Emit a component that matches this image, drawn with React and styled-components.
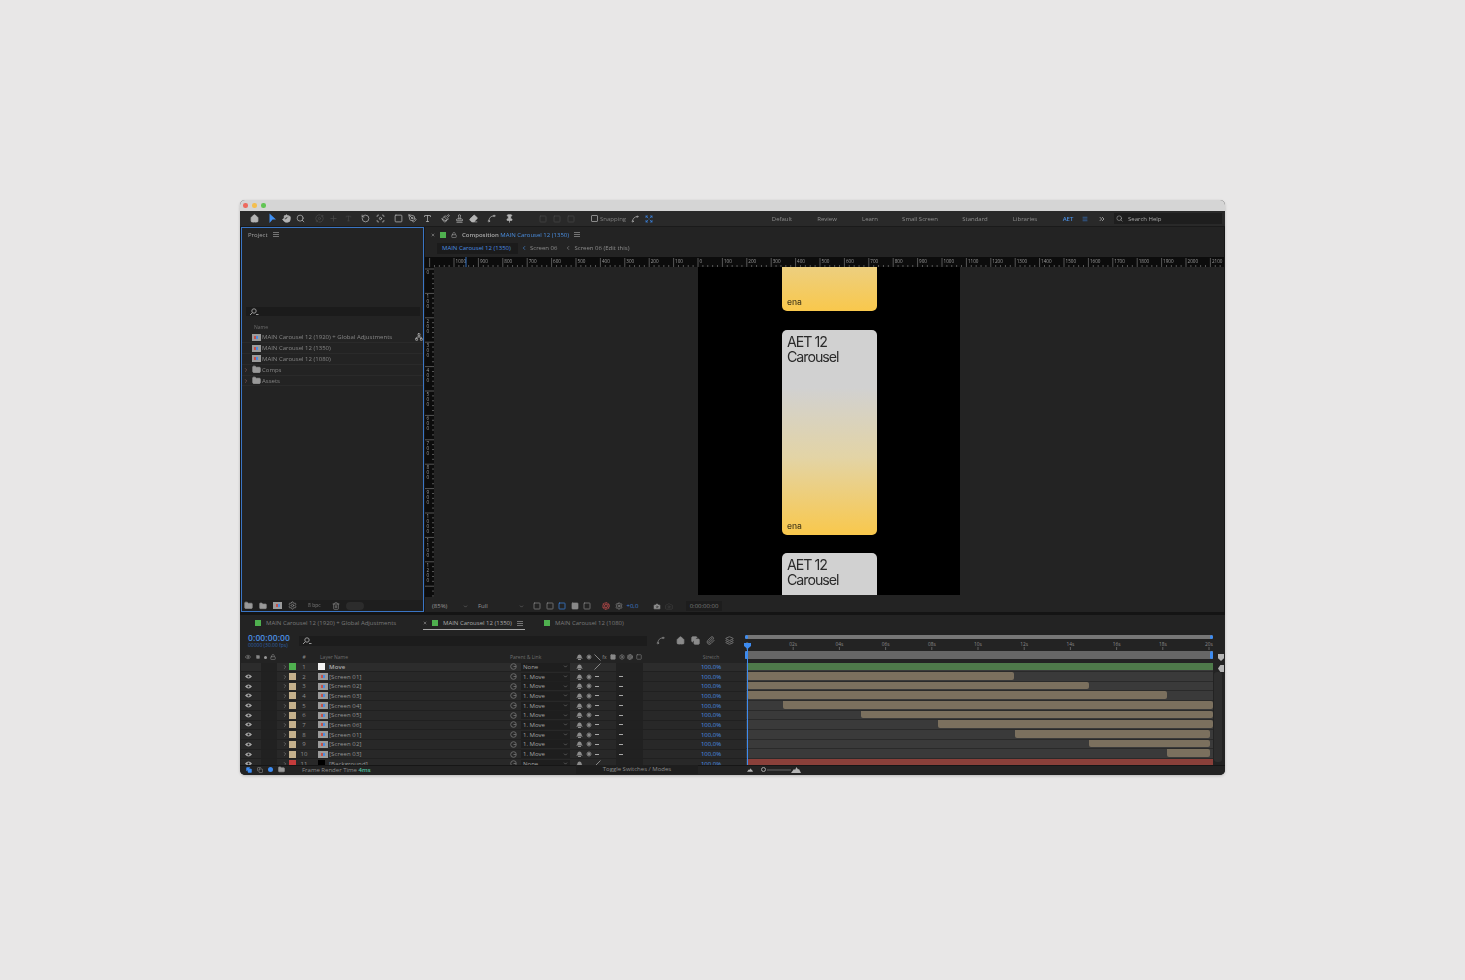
import React from 'react';
import styled, { createGlobalStyle } from 'styled-components';
import { Home, Hand, Search, Plus, RotateCcw, Square, Type, Stamp, Eraser, Pin, Camera, Eye, Lock, Tag, ChevronRight, ChevronDown, ChevronLeft, Menu, X, Folder, Trash2, Paperclip, ChevronsRight, Settings, Network, PenTool, Paintbrush, Focus, Orbit, Spline, Expand, Aperture, Layers, Copy } from 'lucide-react';

const GlobalStyle = createGlobalStyle`
  html, body { margin: 0; padding: 0; background: #e8e7e7; }
  body { font-family: "Open Sans", "Liberation Sans", sans-serif; }
  * { box-sizing: border-box; }
`;

const Page = styled.div`
  width: 1465px;
  height: 980px;
  padding: 200px 0 0 240px;
`;
const Window = styled.div`
  width: 985px;
  height: 575px;
  display: flex;
  flex-direction: column;
  background: #232323;
  border-radius: 5px;
  overflow: hidden;
  font-size: 6px;
  font-weight: 500;
  line-height: 1;
  color: #969696;
  filter: blur(0.25px);
  box-shadow: 0 1px 3px rgba(0, 0, 0, 0.2);
`;
const TitleBar = styled.div`
  height: 11px;
  flex: none;
  display: flex;
  align-items: center;
  gap: 4.5px;
  padding-left: 3px;
  background: #d5d5d5;
`;
const Dot = styled.span`
  flex: none;
  width: ${p => p.$s || 4.5}px;
  height: ${p => p.$s || 4.5}px;
  margin-left: ${p => p.$ml || 0}px;
  border-radius: 50%;
  background: ${p => p.$c};
`;
const Toolbar = styled.div`
  height: 16px;
  flex: none;
  display: flex;
  align-items: center;
  background: #292929;
  border-bottom: 1px solid #1a1a1a;
`;
const Tool = styled.span`
  flex: none;
  width: 10px;
  height: 14px;
  display: flex;
  align-items: center;
  justify-content: center;
  margin-left: ${p => p.$ml || 0}px;
  color: ${p => p.$c || (p.$dim ? '#4a4a4a' : '#b4b4b4')};
`;
const Snap = styled.span`
  display: flex;
  align-items: center;
  gap: 2px;
  margin-left: 15px;
  width: 37px;
  color: #808080;
  white-space: nowrap;
`;
const Check = styled.span`
  flex: none;
  width: 7px;
  height: 7px;
  border: 1px solid #8a8a8a;
  border-radius: 1px;
`;
const Workspace = styled.span`
  flex: none;
  width: ${p => p.$w}px;
  margin-left: ${p => p.$ml || 0}px;
  margin-top: 1px;
  text-align: center;
  color: ${p => (p.$on ? '#4a8ee0' : '#8d8d8d')};
  font-weight: ${p => (p.$on ? 600 : 500)};
`;
const HelpBox = styled.div`
  flex: none;
  width: 108px;
  height: 11px;
  margin-left: 7px;
  display: flex;
  align-items: center;
  gap: 5px;
  padding-left: 2px;
  background: #1e1e1e;
  color: #a8a8a8;
`;
const Upper = styled.div`
  height: 385px;
  flex: none;
  display: flex;
  padding-left: 1px;
  background: #171717;
`;
const ProjectPanel = styled.div`
  width: 183px;
  flex: none;
  display: flex;
  flex-direction: column;
  background: #232323;
  border: 1px solid #3a75c4;
  padding-top: 3px;
`;
const PanelTitle = styled.div`
  display: flex;
  align-items: center;
  gap: 5px;
  height: 7px;
  padding-left: 6px;
  color: #a0a0a0;
`;
const ProjectSearch = styled.div`
  height: 9px;
  margin: 69px 3px 0 4px;
  padding-left: 3px;
  display: flex;
  align-items: center;
  background: #1b1b1b;
  color: #999;
`;
const NameHead = styled.div`
  margin-top: 8.5px;
  height: 8px;
  padding-left: 12px;
  color: #6c6c6c;
  font-size: 5px;
`;
const ProjectRow = styled.div`
  height: 10.8px;
  display: flex;
  align-items: center;
  gap: 1.5px;
  padding-left: 1px;
  border-bottom: 1px solid #2a2a2a;
  color: #868686;
`;
const Twist = styled.span`
  width: 7px;
  flex: none;
  display: flex;
  color: #9a6f6f;
`;
const ProjectName = styled.span`
  flex: 1;
  white-space: nowrap;
`;
const ThumbBox = styled.span`
  flex: none;
  width: ${p => p.$w || 9}px;
  height: ${p => p.$h || 7}px;
  background: #9b9b9b;
  display: flex;
  align-items: center;
  justify-content: center;
`;
const Pip = styled.span`
  width: 2px;
  height: 3px;
  background: ${p => p.$c};
`;
const ProjectFoot = styled.div`
  margin-top: auto;
  height: 11px;
  display: flex;
  align-items: center;
  gap: 6px;
  padding-left: 2px;
  background: #1e1e1e;
  color: #888;
`;
const Bpc = styled.span`
  font-size: 5px;
  margin: 0 5px 0 5px;
  color: #7c7c7c;
`;
const Pill = styled.span`
  width: 18px;
  height: 8px;
  border-radius: 4px;
  background: #2c2c2c;
`;
const CompPanel = styled.div`
  flex: 1;
  margin-left: 1px;
  margin-right: 1px;
  display: flex;
  flex-direction: column;
  background: #232323;
  overflow: hidden;
`;
const CompHead = styled.div`
  height: 15px;
  flex: none;
  display: flex;
  align-items: center;
  gap: 5px;
  padding-left: 6px;
  font-weight: 600;
  color: #aaa;
`;
const Swatch = styled.span`
  flex: none;
  width: ${p => p.$s || 6}px;
  height: ${p => p.$s || 6}px;
  background: ${p => p.$c};
`;
const Blue = styled.span`
  color: #4a8ee0;
  font-weight: 500;
`;
const Crumbs = styled.div`
  height: 15px;
  flex: none;
  display: flex;
  align-items: center;
  padding: 0 0 3px 12px;
  gap: 3px;
  color: #8c8c8c;
  white-space: nowrap;
`;
const CrumbOn = styled.span`
  background: #1b1b1b;
  color: #4a8ee0;
  padding: 2.5px 0 2.5px 5px;
  width: 81px;
`;
const RulerSvg = styled.svg`
  display: block;
  flex: none;
  background: #0c0c0c;
`;
const Viewer = styled.div`
  height: 330px;
  flex: none;
  display: flex;
`;
const Canvas = styled.div`
  flex: 1;
  display: flex;
  justify-content: center;
  background: #232323;
`;
const Stage = styled.div`
  width: 262px;
  height: 328px;
  overflow: hidden;
  background: #000;
  display: flex;
  flex-direction: column;
  align-items: center;
  gap: 18.5px;
`;
const Card = styled.div`
  width: 95px;
  height: 205px;
  flex: none;
  display: flex;
  flex-direction: column;
  justify-content: ${p => (p.$end ? 'flex-end' : 'space-between')};
  padding: 4px 5px 5px 5.5px;
  margin-top: ${p => p.$mt || 0}px;
  border-radius: 5px;
  background: linear-gradient(#d1d1d1 0%, #d1d1d1 28%, #e3d4a6 62%, #f9c84c 100%);
  color: #2a2a2a;
`;
const CardTitle = styled.div`
  font-family: Inter, "Liberation Sans", sans-serif;
  font-size: 14.2px;
  line-height: 15px;
  letter-spacing: -1px;
  font-weight: 400;
`;
const CardMark = styled.div`
  font-family: Inter, "Liberation Sans", sans-serif;
  font-size: 8.5px;
  font-weight: 500;
  letter-spacing: -0.1px;
  line-height: 8px;
  color: #4a3e1c;
`;
const CompFoot = styled.div`
  height: 15px;
  flex: none;
  display: flex;
  align-items: center;
  padding: 3px 0 0 7px;
  color: #969696;
  background: #232323;
`;
const FootSelect = styled.span`
  flex: none;
  display: flex;
  align-items: center;
  justify-content: space-between;
  width: ${p => p.$w}px;
  margin-left: ${p => p.$ml || 0}px;
`;
const FootIcon = styled.span`
  flex: none;
  display: flex;
  width: ${p => p.$w || 8}px;
  margin-left: ${p => p.$ml || 4.5}px;
  color: ${p => p.$c || '#8e8e8e'};
`;
const TimeChip = styled.span`
  flex: none;
  width: 36px;
  height: 10px;
  margin-left: 13px;
  text-align: center;
  line-height: 10px;
  background: #1d1d1d;
  color: #7c7c7c;
  white-space: nowrap;
`;
const Gap = styled.div`
  height: 3px;
  flex: none;
  background: #141414;
`;
const Lower = styled.div`
  flex: 1;
  display: flex;
  flex-direction: column;
  min-height: 0;
  background: #232323;
`;
const Tabs = styled.div`
  height: 17px;
  flex: none;
  display: flex;
  align-items: flex-start;
  padding-top: 1px;
`;
const Tab = styled.span`
  flex: none;
  height: 14px;
  padding-top: 1px;
  display: flex;
  align-items: center;
  gap: 5px;
  white-space: nowrap;
  width: ${p => p.$w}px;
  margin-left: ${p => p.$ml || 0}px;
  color: ${p => (p.$on ? '#ababab' : '#7a7a7a')};
  border-bottom: 1px solid ${p => (p.$on ? '#a9a9a9' : 'transparent')};
`;
const TimeRow = styled.div`
  flex: 1;
  min-height: 0;
  display: flex;
`;
const LeftPane = styled.div`
  width: 505px;
  flex: none;
  margin-left: 1px;
  display: flex;
  flex-direction: column;
  min-height: 0;
`;
const Controls = styled.div`
  height: 20px;
  flex: none;
  display: flex;
  align-items: center;
  padding-bottom: 3px;
`;
const Clock = styled.div`
  width: 58px;
  padding: 1px 0 0 7px;
  flex: none;
  align-self: flex-start;
  white-space: nowrap;
`;
const ClockBig = styled.div`
  color: #4a8ee0;
  font-size: 8.5px;
  font-weight: 600;
  line-height: 9px;
  letter-spacing: 0.1px;
`;
const ClockSmall = styled.div`
  color: #2f62a8;
  font-size: 5px;
  line-height: 6px;
`;
const LayerSearch = styled.div`
  width: 348px;
  height: 10px;
  flex: none;
  padding-left: 3px;
  display: flex;
  align-items: center;
  background: #1c1c1c;
  color: #999;
`;
const CtlIcon = styled.span`
  flex: none;
  display: flex;
  margin-left: ${p => p.$ml}px;
  color: #8a8a8a;
`;
const grid = '14px 6px 8px 8px 3px 9px 8px 14px 7px 11px 179px 10px 3px 49px 5px 9px 9px 8px 15px 9px 9px 9px 52px 32px 19px';
const HeadRow = styled.div`
  height: 10.5px;
  flex: none;
  display: grid;
  grid-template-columns: ${grid};
  align-items: center;
  color: #6e6e6e;
  font-size: 5px;
  white-space: nowrap;
`;
const Rows = styled.div`
  flex: 1;
  min-height: 0;
  overflow: hidden;
`;
const Row = styled.div`
  height: 9.7px;
  display: grid;
  grid-template-columns: ${grid};
  align-items: center;
  background: ${p => (p.$first ? '#2c2c2c' : '#282828')};
  border-bottom: 0.5px solid #202020;
  white-space: nowrap;
`;
const Cell = styled.span`
  display: flex;
  align-items: center;
  justify-content: ${p => (p.$split ? 'space-between' : 'center')};
  height: 100%;
  margin-left: ${p => p.$ml || 0}px;
  color: ${p => p.$c || '#939393'};
  background: ${p => (p.$dark ? '#212121' : 'transparent')};
`;
const LayerName = styled.span`
  color: ${p => (p.$bold ? '#adadad' : '#949494')};
  font-weight: ${p => (p.$bold ? 600 : 500)};
  letter-spacing: 0.1px;
`;
const Num = styled.span`
  text-align: center;
  color: #8e8e8e;
`;
const ParentBox = styled.span`
  display: flex;
  align-items: center;
  justify-content: space-between;
  height: 8px;
  padding: 0 2px 0 2px;
  background: #1e1e1e;
  color: #a2a2a2;
`;
const Stretch = styled.span`
  color: ${p => p.$c || '#4a8ee0'};
  text-align: center;
`;
const Shifted = styled.span`
  margin-left: ${p => p.$ml}px;
`;
const Timeline = styled.div`
  flex: 1;
  min-width: 0;
  position: relative;
  display: flex;
  flex-direction: column;
  min-height: 0;
`;
const NavBar = styled.div`
  height: 4px;
  margin: 3px 12px 0 -1px;
  flex: none;
  background: #777;
  border-radius: 2px;
  display: flex;
  justify-content: space-between;
`;
const NavEnd = styled.span`
  width: 3px;
  height: ${p => p.$h || 4}px;
  background: #3d8bf0;
  border-radius: 2px;
`;
const WorkArea = styled.div`
  height: 8px;
  margin: 1px 12px 3.7px -1px;
  flex: none;
  background: #666;
  display: flex;
  justify-content: space-between;
`;
const TickSvg = styled.svg`
  display: block;
  flex: none;
`;
const Tracks = styled.div`
  flex: 1;
  min-height: 0;
  width: 467px;
  overflow: hidden;
  background: #3a3a3a;
`;
const Track = styled.div`
  height: ${p => p.$h}px;
  padding-left: ${p => p.$from}px;
  padding-bottom: 1px;
  border-bottom: 0.4px solid #2a2a2a;
  display: flex;
`;
const Bar = styled.div`
  height: 100%;
  flex: none;
  border-radius: ${p => (p.$soft ? '0 2px 2px 2px' : '0')};
  background: ${p => p.$c};
`;
const Playhead = styled.div`
  position: absolute;
  left: 1px;
  top: 12px;
  bottom: 0;
  width: 1px;
  background: #3d8bf0;
`;
const PlayTop = styled.span`
  position: absolute;
  left: -3px;
  top: -1px;
  width: 7px;
  height: 6px;
  background: #3d8bf0;
  clip-path: polygon(0 0, 100% 0, 100% 50%, 50% 100%, 0 50%);
`;
const Marker = styled.span`
  position: absolute;
  left: ${p => p.$x}px;
  top: ${p => p.$y}px;
  width: 6px;
  height: 7px;
  background: #b5b5b5;
  clip-path: ${p => p.$clip};
`;
const Scroller = styled.span`
  position: absolute;
  left: 468px;
  top: 40px;
  bottom: 3px;
  width: 8px;
  border-radius: 3px;
  background: #2e2e2e;
`;
const Status = styled.div`
  height: 10px;
  flex: none;
  display: flex;
  align-items: center;
  padding: 0 0 1.5px 6px;
  background: #232323;
  border-top: 1px solid #161616;
  color: #8c8c8c;
`;
const StatusIcon = styled.span`
  flex: none;
  display: flex;
  margin-left: ${p => p.$ml || 0}px;
  color: ${p => p.$c || '#9a9a9a'};
`;
const StatusText = styled.span`
  flex: none;
  width: 274px;
  margin-left: 17px;
`;
const Green = styled.b`
  color: #4fc3a1;
  font-weight: 600;
`;
const ToggleBar = styled.span`
  flex: none;
  width: 122px;
  height: 9px;
  line-height: 9px;
  text-align: center;
  background: #1e1e1e;
  color: #8c8c8c;
`;
const Slider = styled.span`
  flex: none;
  width: 24px;
  height: 1.5px;
  margin-left: 1px;
  background: #444;
`;
const Ring = styled.span`
  flex: none;
  width: 5px;
  height: 5px;
  margin-left: 6px;
  border: 1px solid #a5a5a5;
  border-radius: 50%;
`;

const Arrow = () => <svg width="9" height="11" viewBox="0 0 9 11"><path d="M1.5 0.5 L8 6.5 L4.6 6.6 L1.5 10 Z" fill="#3f8ff2" /></svg>;
const Thumb = ({ w, h }) => (
  <ThumbBox $w={w} $h={h}>
    <Pip $c="#c8524a" /><Pip $c="#4a8ee0" />
  </ThumbBox>
);
const Lens = () => <svg width="10" height="8" viewBox="0 0 10 8" fill="none" stroke="currentColor"><circle cx="5" cy="3" r="2.2" /><path d="M3.4 4.6 L1 7 M7 6.5 L9.5 6.5" /></svg>;
const Burger = () => <svg width="6" height="5" viewBox="0 0 6 5" fill="none" stroke="#888" strokeWidth=".8"><path d="M0 .5H6M0 2.5H6M0 4.5H6" /></svg>;
const EyeIcon = () => <svg width="7" height="5" viewBox="0 0 7 5"><path d="M0 2.5 Q3.5 -1.5 7 2.5 Q3.5 6.5 0 2.5Z" fill="#a5a5a5" /><circle cx="3.5" cy="2.5" r="1" fill="#222" /></svg>;
const Shy = () => <svg width="7" height="6" viewBox="0 0 7 6"><path d="M1.2 3.5 Q1.5 .5 3.5 .5 Q5.5 .5 5.8 3.5 L7 4.5 H0 Z M2 5 h3 v1 h-3z" fill="#8c8c8c" /></svg>;
const Sun = () => <svg width="6" height="6" viewBox="0 0 6 6"><circle cx="3" cy="3" r="1.7" fill="#8c8c8c" /><path d="M3 0V6M0 3H6M1 1L5 5M5 1L1 5" stroke="#8c8c8c" strokeWidth=".6" /></svg>;
const Pick = () => <svg width="7" height="7" viewBox="0 0 7 7" fill="none" stroke="#6f6f6f" strokeWidth=".9"><circle cx="3.5" cy="3.5" r="2.8" /><path d="M3.5 3.5 H6" /></svg>;
const Slash = ({ back }) => <svg width="7" height="7" viewBox="0 0 7 7" stroke="#a0a0a0" strokeWidth=".8"><path d={back ? 'M.5 .5L6.5 6.5' : 'M.5 6.5L6.5 .5'} /></svg>;
const Dash = () => <svg width="4" height="1" viewBox="0 0 4 1"><path d="M0 0h4v1H0z" fill="#a8a8a8" /></svg>;
const Mountain = ({ w = 10, h = 6 }) => <svg width={w} height={h} viewBox="0 0 10 6"><path d="M0 6 L3 2 L4 3 L5.5 0 L7 2.5 L8 2 L10 6Z" fill="#b5b5b5" /></svg>;

const HRuler = () => {
  const zero = 698 - 425;
  const labels = [];
  const ticks = [];
  for (let n = -11; n <= 21; n++) {
    const x = zero + n * 24.4;
    labels.push(
      <g key={n}>
        <path d={`M${x} 1V10`} stroke="#8a8a8a" strokeWidth=".6" />
        {n >= -10 && <text x={x + 1.5} y="6" fontSize="4.6" fill="#9c9c9c" fontFamily="Open Sans">{Math.abs(n) * 100}</text>}
      </g>
    );
    for (let t = 1; t < 5; t++) ticks.push(<path key={`${n}-${t}`} d={`M${x + t * 4.88} 8V10`} stroke="#8a8a8a" strokeWidth=".6" />);
  }
  return (
    <RulerSvg width="799" height="10">
      {ticks}
      {labels}
      <path d="M41 0V10" stroke="#3d8bf0" strokeWidth=".8" />
    </RulerSvg>
  );
};
const VRuler = () => {
  const items = [];
  for (let n = 0; n < 14; n++) {
    const y = 2 + n * 24.4;
    const digits = n < 13 ? String(n * 100).split('') : [];
    items.push(
      <g key={n}>
        <path d={`M0 ${y}H9`} stroke="#8a8a8a" strokeWidth=".6" />
        {digits.map((d, i) => <text key={i} x="1.5" y={y + 5 + i * 5} fontSize="4.6" fill="#9c9c9c" fontFamily="Open Sans">{d}</text>)}
        {[1, 2, 3, 4].map(t => <path key={t} d={`M7 ${y + t * 4.88}H9`} stroke="#8a8a8a" strokeWidth=".6" />)}
      </g>
    );
  }
  return <RulerSvg width="9" height="330">{items}</RulerSvg>;
};
const TimeTicks = () => {
  const labels = ['00s', '02s', '04s', '06s', '08s', '10s', '12s', '14s', '16s', '18s', '20s'];
  return (
    <TickSvg width="479" height="11">
      {labels.map((l, i) => {
        const x = 1 + i * 46.2;
        return (
          <g key={l}>
            <text x={x} y="7" textAnchor="middle" fontSize="4.8" fill="#8c8c8c" fontFamily="Open Sans">{l}</text>
            <path d={`M${x} 8V11`} stroke="#8c8c8c" strokeWidth=".6" />
          </g>
        );
      })}
    </TickSvg>
  );
};

const tools = [
  [Arrow, 0, false, 8], [Hand, 9, false, 4, true], [Search, 9, false, 4], [Orbit, 9, true, 9],
  [Plus, 9, true, 4], [Type, 7, true, 5], [RotateCcw, 9, false, 7], [Focus, 9, false, 5], [Square, 9, false, 8],
  [PenTool, 9, false, 4], [Type, 9, false, 5], [Paintbrush, 9, false, 8], [Stamp, 9, false, 4], [Eraser, 9, false, 4, true],
  [Spline, 9, false, 8], [Pin, 9, false, 8, true], [Square, 8, true, 24], [Square, 8, true, 4], [Square, 8, true, 4],
];
const layers = [
  ['Move', '#4fb04f', 1],
  ['[Screen 01]', '#c4b08c', 2], ['[Screen 02]', '#c4b08c', 3], ['[Screen 03]', '#c4b08c', 4],
  ['[Screen 04]', '#c4b08c', 5], ['[Screen 05]', '#c4b08c', 6], ['[Screen 06]', '#c4b08c', 7],
  ['[Screen 01]', '#c4b08c', 8], ['[Screen 02]', '#c4b08c', 9], ['[Screen 03]', '#c4b08c', 10],
  ['[Background]', '#c43c3c', 11],
];
const bars = [
  [1, 466, '#4e7a4a'], [1, 267, '#7b705e'], [1, 342, '#7b705e'], [1, 420, '#7b705e'],
  [37, 430, '#7b705e'], [115, 352, '#7b705e'], [192, 275, '#7b705e'], [269, 195, '#7b705e'],
  [343, 121, '#7b705e'], [421, 43, '#7b705e'], [1, 466, '#8a403a'],
];

function LayerRow({ name, color, n }) {
  const first = n === 1;
  const last = n === 11;
  return (
    <Row $first={first}>
      <Cell>{!first && <EyeIcon />}</Cell>
      <span />
      <Cell $dark />
      <Cell $dark />
      <span />
      <Cell><ChevronRight size={6} strokeWidth={2} /></Cell>
      <Swatch $c={color} $s={7} />
      <Num>{n}</Num>
      <span />
      {first || last ? <Swatch $c={first ? '#f2f2f2' : '#000'} $s={7} /> : <Thumb w={10} h={7} />}
      <LayerName $bold={first}>{name}</LayerName>
      <Cell><Pick /></Cell>
      <span />
      <ParentBox>{first || last ? 'None' : '1. Move'}<ChevronDown size={5} strokeWidth={2} /></ParentBox>
      <span />
      <Cell><Shy /></Cell>
      <Cell>{!first && !last && <Sun />}</Cell>
      <Cell>{first || last ? <Slash /> : <Dash />}</Cell>
      <span />
      <Cell $dark>{!first && !last && <Dash />}</Cell>
      <Cell $dark />
      <Cell $dark />
      <span />
      <Stretch>100,0%</Stretch>
      <span />
    </Row>
  );
}

export default function App() {
  return (
    <Page>
      <GlobalStyle />
      <Window>
        <TitleBar>
          <Dot $c="#ed6a5e" /><Dot $c="#f4bf4f" /><Dot $c="#61c554" />
        </TitleBar>
        <Toolbar>
          <Tool $ml={9}><Home size={9} strokeWidth={2.4} fill="currentColor" /></Tool>
          {tools.map(([I, s, dim, ml, solid], i) => (
            <Tool key={i} $ml={ml} $dim={dim}>{I === Arrow ? <Arrow /> : <I size={s} strokeWidth={2} fill={solid ? 'currentColor' : 'none'} />}</Tool>
          ))}
          <Snap><Check />Snapping</Snap>
          <Tool $ml={2}><Spline size={8} /></Tool>
          <Tool $ml={4} $c="#3d8bf0"><Expand size={8} /></Tool>
          <Workspace $w={46} $ml={105}>Default</Workspace>
          <Workspace $w={44}>Review</Workspace>
          <Workspace $w={42}>Learn</Workspace>
          <Workspace $w={58}>Small Screen</Workspace>
          <Workspace $w={52}>Standard</Workspace>
          <Workspace $w={48}>Libraries</Workspace>
          <Workspace $w={38} $on>AET</Workspace>
          <Tool $ml={-7} $c="#3d8bf0"><Menu size={6} /></Tool>
          <Tool $ml={7}><ChevronsRight size={8} strokeWidth={2.4} /></Tool>
          <HelpBox><Search size={7} />Search Help</HelpBox>
        </Toolbar>
        <Upper>
          <ProjectPanel>
            <PanelTitle>Project <Burger /></PanelTitle>
            <ProjectSearch><Lens /></ProjectSearch>
            <NameHead>Name</NameHead>
            <ProjectRow><Twist /><Thumb /><ProjectName>MAIN Carousel 12 (1920) + Global Adjustments</ProjectName><Network size={8} color="#bbb" /></ProjectRow>
            <ProjectRow><Twist /><Thumb /><ProjectName>MAIN Carousel 12 (1350)</ProjectName></ProjectRow>
            <ProjectRow><Twist /><Thumb /><ProjectName>MAIN Carousel 12 (1080)</ProjectName></ProjectRow>
            <ProjectRow><Twist><ChevronRight size={6} strokeWidth={2} /></Twist><Folder size={9} fill="#999" color="#999" /><ProjectName>Comps</ProjectName></ProjectRow>
            <ProjectRow><Twist><ChevronRight size={6} strokeWidth={2} /></Twist><Folder size={9} fill="#999" color="#999" /><ProjectName>Assets</ProjectName></ProjectRow>
            <ProjectFoot>
              <Folder size={9} fill="#999" />
              <Folder size={8} fill="#999" />
              <Thumb />
              <Settings size={9} />
              <Bpc>8 bpc</Bpc>
              <Trash2 size={8} />
              <Pill />
            </ProjectFoot>
          </ProjectPanel>
          <CompPanel>
            <CompHead>
              <X size={4} strokeWidth={3} />
              <Swatch $c="#4fb04f" />
              <Lock size={6} strokeWidth={2} />
              <span>Composition <Blue>MAIN Carousel 12 (1350)</Blue></span>
              <Burger />
            </CompHead>
            <Crumbs>
              <CrumbOn>MAIN Carousel 12 (1350)</CrumbOn>
              <ChevronLeft size={6} color="#4a8ee0" strokeWidth={2.5} />
              <span>Screen 06</span>
              <ChevronLeft size={6} strokeWidth={2.5} style={{ marginLeft: 5 }} />
              <span>Screen 06 (Edit this)</span>
            </Crumbs>
            <HRuler />
            <Viewer>
              <VRuler />
              <Canvas>
                <Stage>
                  <Card $mt={-161} $end>
                    <CardMark>ena</CardMark>
                  </Card>
                  <Card>
                    <CardTitle>AET 12<br />Carousel</CardTitle>
                    <CardMark>ena</CardMark>
                  </Card>
                  <Card>
                    <CardTitle>AET 12<br />Carousel</CardTitle>
                  </Card>
                </Stage>
              </Canvas>
            </Viewer>
            <CompFoot>
              <FootSelect $w={36}>(85%) <ChevronDown size={5} strokeWidth={2} /></FootSelect>
              <FootSelect $w={46} $ml={10}>Full <ChevronDown size={5} strokeWidth={2} /></FootSelect>
              <FootIcon $ml={9}><Square size={8} /></FootIcon>
              <FootIcon><Square size={8} /></FootIcon>
              <FootIcon $c="#3d8bf0"><Square size={8} /></FootIcon>
              <FootIcon><Square size={8} fill="#888" /></FootIcon>
              <FootIcon><Square size={8} /></FootIcon>
              <FootIcon $ml={11} $c="#b84a4a"><Aperture size={8} /></FootIcon>
              <FootIcon><Settings size={8} /></FootIcon>
              <FootIcon $ml={4} $c="#3d7ccc" $w={14}>+0,0</FootIcon>
              <FootIcon $ml={12}><Camera size={9} fill="#999" color="#333" /></FootIcon>
              <FootIcon $c="#3f3f3f"><Camera size={9} /></FootIcon>
              <TimeChip>0:00:00:00</TimeChip>
            </CompFoot>
          </CompPanel>
        </Upper>
        <Gap />
        <Lower>
          <Tabs>
            <Tab $w={165} $ml={15}><Swatch $c="#4fb04f" />MAIN Carousel 12 (1920) + Global Adjustments</Tab>
            <Tab $w={102} $ml={3} $on><X size={4} strokeWidth={3} /><Swatch $c="#4fb04f" />MAIN Carousel 12 (1350)<Burger /></Tab>
            <Tab $w={100} $ml={19}><Swatch $c="#4fb04f" />MAIN Carousel 12 (1080)</Tab>
          </Tabs>
          <TimeRow>
            <LeftPane>
              <Controls>
                <Clock>
                  <ClockBig>0:00:00:00</ClockBig>
                  <ClockSmall>00000 (30.00 fps)</ClockSmall>
                </Clock>
                <LayerSearch><Lens /></LayerSearch>
                <CtlIcon $ml={9}><Spline size={9} /></CtlIcon>
                <CtlIcon $ml={11}><Home size={9} fill="#8a8a8a" /></CtlIcon>
                <CtlIcon $ml={6}><Copy size={9} fill="#8a8a8a" /></CtlIcon>
                <CtlIcon $ml={6}><Paperclip size={9} /></CtlIcon>
                <CtlIcon $ml={10}><Layers size={9} /></CtlIcon>
              </Controls>
              <HeadRow>
                <Cell><Eye size={6} /></Cell>
                <Cell><Square size={4} fill="#888" /></Cell>
                <Cell><Dot $c="#999" $s={3} /></Cell>
                <Cell><Lock size={6} /></Cell>
                <span />
                <Cell $ml={12}><Tag size={7} fill="#888" /></Cell>
                <span />
                <Num>#</Num>
                <Shifted $ml={9}>Layer Name</Shifted>
                <span />
                <span />
                <span />
                <span />
                <Shifted $ml={-11}>Parent &amp; Link</Shifted>
                <span />
                <Cell><Shy /></Cell>
                <Cell><Sun /></Cell>
                <Cell><Slash back /></Cell>
                <Cell $split>&nbsp;fx<Square size={6} fill="#888" /></Cell>
                <Cell $ml={2}><Settings size={6} /></Cell>
                <Cell $ml={1}><Aperture size={6} /></Cell>
                <Cell><Square size={6} /></Cell>
                <span />
                <Stretch $c="#6e6e6e">Stretch</Stretch>
                <span />
              </HeadRow>
              <Rows>
                {layers.map(([name, color, n]) => <LayerRow key={n} name={name} color={color} n={n} />)}
              </Rows>
            </LeftPane>
            <Timeline>
              <NavBar><NavEnd /><NavEnd /></NavBar>
              <TimeTicks />
              <WorkArea><NavEnd $h={8} /><NavEnd $h={8} /></WorkArea>
              <Tracks>
                {bars.map(([from, w, c], i) => (
                  <Track key={i} $h={i === 0 ? 9.3 : 9.7} $from={from}>
                    <Bar $c={c} $soft={i > 0 && i < 10} style={{ width: w }} />
                  </Track>
                ))}
              </Tracks>
              <Scroller />
              <Playhead><PlayTop /></Playhead>
              <Marker $x={472} $y={22} $clip="polygon(0 0, 100% 0, 100% 60%, 50% 100%, 0 60%)" />
              <Marker $x={472} $y={33} $clip="polygon(0 50%, 40% 0, 100% 0, 100% 100%, 40% 100%)" />
            </Timeline>
          </TimeRow>
          <Status>
            <StatusIcon $c="#3d8bf0"><Copy size={6} fill="#3d8bf0" /></StatusIcon>
            <StatusIcon $ml={5}><Copy size={6} /></StatusIcon>
            <Dot $c="#3d8bf0" $s={5} $ml={5} />
            <StatusIcon $ml={5}><Folder size={7} fill="#999" /></StatusIcon>
            <StatusText>Frame Render Time <Green>4ms</Green></StatusText>
            <ToggleBar>Toggle Switches / Modes</ToggleBar>
            <Tool $ml={47}><Mountain w={6} h={4} /></Tool>
            <Ring />
            <Slider />
            <Tool $ml={0}><Mountain /></Tool>
          </Status>
        </Lower>
      </Window>
    </Page>
  );
}
